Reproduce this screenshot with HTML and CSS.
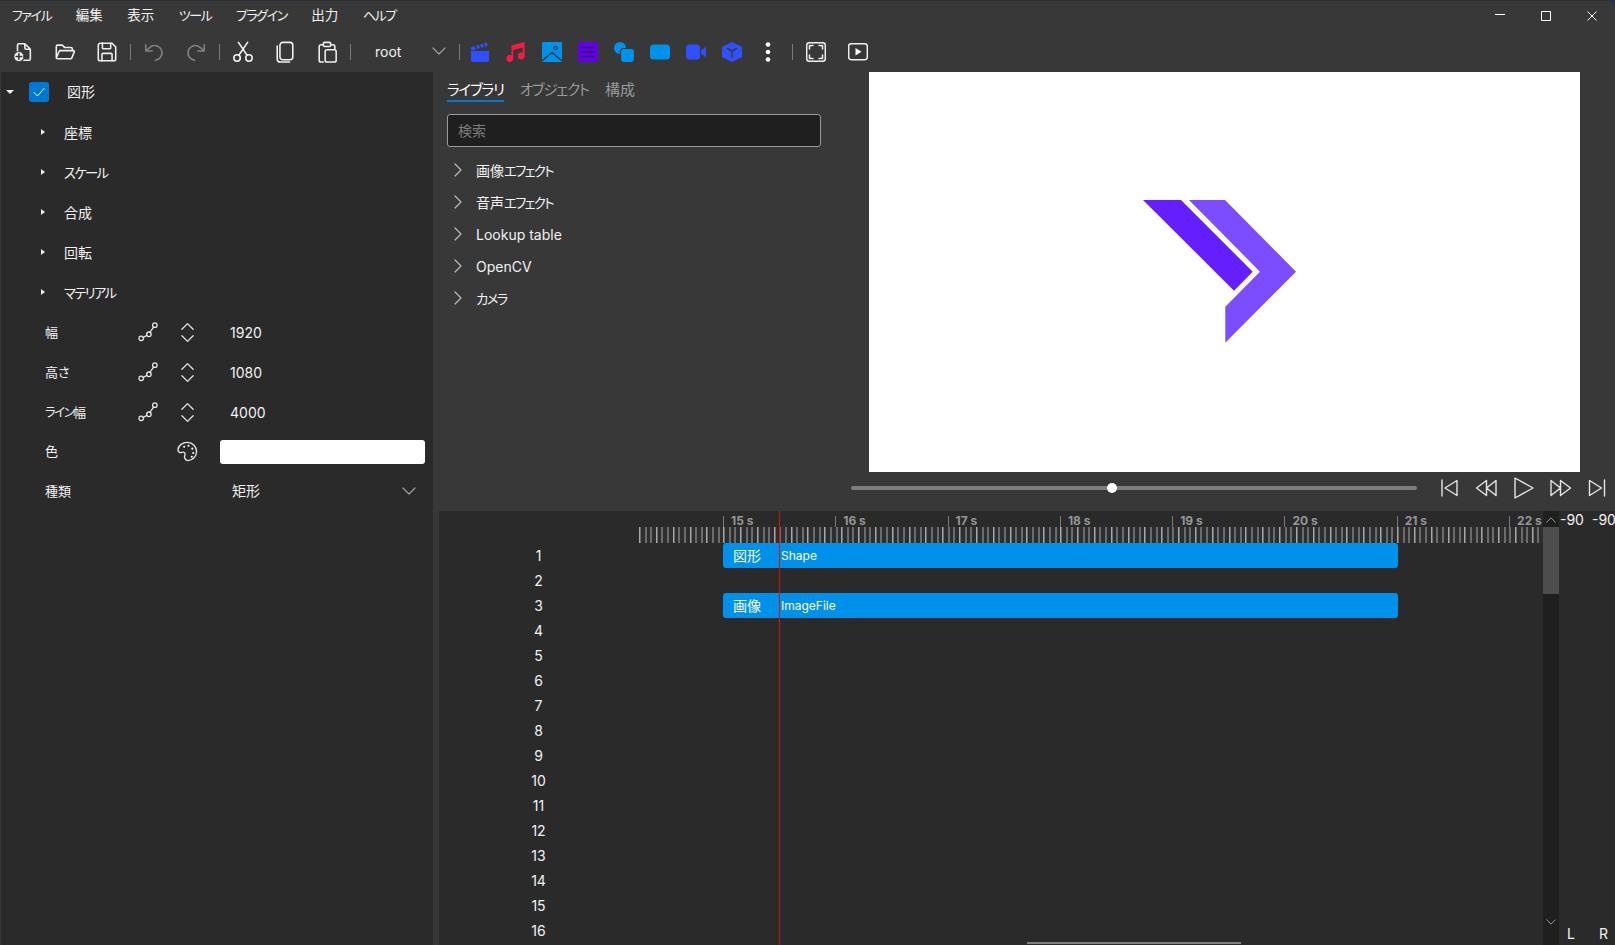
FILE: index.html
```html
<!DOCTYPE html>
<html lang="ja">

<head>
    <meta charset="UTF-8">
    <title>Beutl</title>
    <link rel="stylesheet" href="styles.css">
</head>

<body>

    <svg class="defs" width="0" height="0">
        <symbol id="i-key" viewBox="0 0 22 22">
            <circle cx="3.500" cy="18" r="2.500" />
            <circle cx="12" cy="13.500" r="2.500" />
            <circle cx="18.500" cy="3.500" r="2.500" />
            <path d="M5.800 17l3.900-2.300M13 11.300l4.200-5.700" />
        </symbol>
        <symbol id="i-updown" viewBox="0 0 16 22">
            <path d="M2 7.500l6-6 6 6M2 14.500l6 6 6-6" />
        </symbol>
        <symbol id="i-chevron" viewBox="0 0 14 8">
            <path d="M1 1l6 6 6-6" />
        </symbol>
        <symbol id="i-right" viewBox="0 0 8 14">
            <path d="M1 1l6 6-6 6" />
        </symbol>
    </svg>

    <div class="app">

        <div class="titlebar">
            <nav class="menu">
                <span class="ka">ファイル</span>
                <span>編集</span>
                <span>表示</span>
                <span class="ka">ツール</span>
                <span class="ka">プラグイン</span>
                <span>出力</span>
                <span class="ka">ヘルプ</span>
            </nav>
            <div class="winbtns">
                <span class="winbtn"><svg width="12" height="12" viewBox="0 0 12 12"><path d="M1 4.500h10" /></svg></span>
                <span class="winbtn"><svg width="12" height="12" viewBox="0 0 12 12"><rect x="1.500" y="1.500" width="9" height="9" /></svg></span>
                <span class="winbtn"><svg width="12" height="12" viewBox="0 0 12 12"><path d="M1.500 1.500l9 9M10.500 1.500l-9 9" /></svg></span>
            </div>
        </div>

        <div class="toolbar">
            <span class="tool"><svg viewBox="0 0 24 24"><path d="M6 11V4.500A1.500 1.500 0 0 1 7.500 3H14l6 6v10.500a1.500 1.500 0 0 1-1.500 1.500H13M14 3v4.500A1.500 1.500 0 0 0 15.500 9H20" /><circle class="fill" cx="7.500" cy="17" r="5.500" /><path class="cut" d="M7.500 14v6M4.500 17h6" /></svg></span>
            <span class="tool"><svg viewBox="0 0 24 24"><path d="M2.500 18V6a1.500 1.500 0 0 1 1.500-1.500h5l2.500 2.500h7a1.500 1.500 0 0 1 1.500 1.500V11M2.500 18.500l3-7a1.500 1.500 0 0 1 1.400-1h14.300a1 1 0 0 1 .9 1.400l-2.600 6.500a1.500 1.500 0 0 1-1.400 1H4a1.500 1.500 0 0 1-1.500-1.500z" /></svg></span>
            <span class="tool"><svg viewBox="0 0 24 24"><path d="M4.500 2.500h13l4 4v13a2 2 0 0 1-2 2h-15a2 2 0 0 1-2-2v-15a2 2 0 0 1 2-2z" /><path d="M7 2.500v5a1 1 0 0 0 1 1h7a1 1 0 0 0 1-1v-5M6.500 21.500v-7a1 1 0 0 1 1-1h9a1 1 0 0 1 1 1v7" /></svg></span>
            <span class="sep"></span>
            <span class="tool dim"><svg viewBox="0 0 24 24"><path d="M3 4v7h7M3.500 10.500l4-3.500a8 8 0 1 1 6 14" /></svg></span>
            <span class="tool dim"><svg viewBox="0 0 24 24"><path d="M21 4v7h-7M20.500 10.500l-4-3.500a8 8 0 1 0-6 14" /></svg></span>
            <span class="sep"></span>
            <span class="tool"><svg viewBox="0 0 24 24"><circle cx="5.500" cy="18.500" r="3.500" /><circle cx="18.500" cy="18.500" r="3.500" /><path d="M7.500 15.500L17 1.500M16.500 15.500L7 1.500" /></svg></span>
            <span class="tool"><svg viewBox="0 0 24 24"><rect x="6.500" y="1.500" width="14" height="19" rx="3" /><path d="M3.500 5.500v14a3.500 3.500 0 0 0 3.500 3.500h10" /></svg></span>
            <span class="tool"><svg viewBox="0 0 24 24"><path d="M8 4H5.500a2 2 0 0 0-2 2v15a2 2 0 0 0 2 2H8M16 4h2.500a2 2 0 0 1 2 2v3" /><rect x="8" y="1.500" width="8" height="4.500" rx="1.500" /><rect x="10" y="9.500" width="12" height="13.500" rx="2" /></svg></span>
            <span class="sep"></span>
            <div class="combo">
                <span>root</span>
                <svg class="line" width="14" height="8"><use href="#i-chevron" /></svg>
            </div>
            <span class="sep"></span>
            <span class="tool color"><svg viewBox="0 0 20 20"><path fill="#304ffe" d="M1 9h18v9a2 2 0 0 1-2 2H3a2 2 0 0 1-2-2z" /><path fill="#304ffe" d="M.5 5.500L16.500.5l1.400 3.500L1.500 8.500z" /><path stroke="#383838" stroke-width="1.300" d="M5 3.500l2 4M9 2.500l2 4M13 1.500l2 4" /></svg></span>
            <span class="tool color"><svg viewBox="0 0 20 20"><g fill="#ff1744"><circle cx="3.800" cy="16.500" r="3.400" /><circle cx="15.200" cy="14" r="3.400" /><path d="M5.500 3.500L18.500 0v14h-1.800V5.500L7.200 8v8.500H5.500z" /></g></svg></span>
            <span class="tool color"><svg viewBox="0 0 20 20"><rect width="20" height="20" rx="1" fill="#0091ea" /><path stroke="#2f3b46" stroke-width="1.500" d="M.5 18.500L10 10.500l9.500 8" /><circle cx="13.500" cy="6" r="1.700" stroke="#2f3b46" stroke-width="1.200" /></svg></span>
            <span class="tool color"><svg viewBox="0 0 20 20"><rect width="20" height="20" rx="2" fill="#6200ea" /><path stroke="#2e2050" stroke-width="1.500" d="M7 5.500h9M7 10h9M7 14.500h9M3.500 5.500h1.500M3.500 10h1.500M3.500 14.500h1.500" /></svg></span>
            <span class="tool color"><svg viewBox="0 0 20 20"><circle cx="6" cy="6" r="6" fill="#0091ea" /><rect x="6.500" y="6.500" width="14" height="14" rx="3.500" fill="#0091ea" stroke="#383838" stroke-width="1.200" /></svg></span>
            <span class="tool color"><svg viewBox="0 0 20 20"><rect y="2.500" width="20" height="15" rx="3.500" fill="#0091ea" /></svg></span>
            <span class="tool color"><svg viewBox="0 0 20 20"><rect y="2.500" width="14" height="15" rx="3.500" fill="#304ffe" /><path fill="#304ffe" d="M15 8.500l5-4v11l-5-4z" /></svg></span>
            <span class="tool color"><svg viewBox="0 0 20 20"><path fill="#304ffe" d="M10 0l10 5v10l-10 5-10-5V5z" /><path stroke="#383838" stroke-width="1.500" d="M5.500 6.500L10 9l4.500-2.500M10 9v6" /></svg></span>
            <span class="tool color"><svg viewBox="0 0 20 20"><g fill="#fff"><circle cx="10" cy="2.500" r="2.300" /><circle cx="10" cy="10" r="2.300" /><circle cx="10" cy="17.500" r="2.300" /></g></svg></span>
            <span class="sep wide"></span>
            <span class="tool box"><svg viewBox="0 0 20 20"><rect x=".7" y=".7" width="18.600" height="18.600" rx="2.500" /><path d="M3.500 7V3.500H7M13 3.500h3.500V7M16.500 13v3.500H13M7 16.500H3.500V13" /></svg></span>
            <span class="tool box"><svg viewBox="0 0 20 20"><rect x=".7" y="1.700" width="18.600" height="16" rx="2.500" /><path class="solid" d="M7.500 6l6 3.700-6 3.700z" /></svg></span>
        </div>

        <div class="workspace">

            <aside class="props">
                <div class="group">
                    <span class="arrow down"></span>
                    <span class="check"><svg width="14" height="14" viewBox="0 0 14 14"><path d="M2 7.500l3.500 3.500L12 3.500" /></svg></span>
                    <span class="group-name">図形</span>
                </div>
                <div class="row sub"><span class="arrow"></span><span>座標</span></div>
                <div class="row sub"><span class="arrow"></span><span class="ka">スケール</span></div>
                <div class="row sub"><span class="arrow"></span><span>合成</span></div>
                <div class="row sub"><span class="arrow"></span><span>回転</span></div>
                <div class="row sub"><span class="arrow"></span><span class="ka">マテリアル</span></div>
                <div class="row prop">
                    <span class="name">幅</span>
                    <svg class="line key"><use href="#i-key" /></svg>
                    <svg class="line updown"><use href="#i-updown" /></svg>
                    <span class="value">1920</span>
                </div>
                <div class="row prop">
                    <span class="name">高さ</span>
                    <svg class="line key"><use href="#i-key" /></svg>
                    <svg class="line updown"><use href="#i-updown" /></svg>
                    <span class="value">1080</span>
                </div>
                <div class="row prop">
                    <span class="name"><span class="ka">ライン</span>幅</span>
                    <svg class="line key"><use href="#i-key" /></svg>
                    <svg class="line updown"><use href="#i-updown" /></svg>
                    <span class="value">4000</span>
                </div>
                <div class="row prop short">
                    <span class="name">色</span>
                    <span></span>
                    <svg class="line palette" viewBox="0 0 22 22"><path d="M11 1.500c-5.500 0-10 3.500-10 8 0 2 2 3 3.500 2.500 2-.5 4-.5 4 1.500 0 1.500-1 2-.5 4 .5 2 1.500 3 3.500 3 5 0 9-4.500 9-9.500s-4-9.500-9.500-9.500z" /><g class="solid"><circle cx="7.500" cy="6" r="1.100" /><circle cx="12" cy="5" r="1.100" /><circle cx="16" cy="8" r="1.100" /><circle cx="17" cy="12.500" r="1.100" /><circle cx="15.500" cy="16.500" r="1.100" /></g></svg>
                    <span class="swatch"></span>
                </div>
                <div class="row prop">
                    <span class="name">種類</span>
                    <span></span>
                    <span></span>
                    <div class="select">
                        <span>矩形</span>
                        <svg class="line" width="14" height="8"><use href="#i-chevron" /></svg>
                    </div>
                </div>
            </aside>

            <div class="center">
                <div class="upper">

                    <section class="library">
                        <div class="tabs">
                            <span class="tab active ka">ライブラリ</span>
                            <span class="tab ka">オブジェクト</span>
                            <span class="tab">構成</span>
                        </div>
                        <div class="search">検索</div>
                        <ul class="tree">
                            <li><svg class="line" width="8" height="14"><use href="#i-right" /></svg><span>画像<span class="ka">エフェクト</span></span></li>
                            <li><svg class="line" width="8" height="14"><use href="#i-right" /></svg><span>音声<span class="ka">エフェクト</span></span></li>
                            <li><svg class="line" width="8" height="14"><use href="#i-right" /></svg><span>Lookup table</span></li>
                            <li><svg class="line" width="8" height="14"><use href="#i-right" /></svg><span>OpenCV</span></li>
                            <li><svg class="line" width="8" height="14"><use href="#i-right" /></svg><span class="ka">カメラ</span></li>
                        </ul>
                    </section>

                    <section class="player">
                        <div class="preview">
                            <svg width="711" height="400" viewBox="869 72 711 400">
                                <polygon fill="#651fff" points="1143,200 1181,200 1252.700,271.700 1234,290.700" />
                                <polygon fill="#7c4dff" points="1189,200 1225,200 1296,271.700 1225.300,342.700 1225.300,306.700 1260,271.700" />
                            </svg>
                        </div>
                        <div class="controls">
                            <div class="slider"><span class="thumb"></span></div>
                            <svg class="line ctl" viewBox="0 0 24 24"><path d="M5 4v16M20 4.500v15L8 12z" /></svg>
                            <svg class="line ctl" viewBox="0 0 24 24"><path d="M12.500 4.500L2.500 12l10 7.500zM22 4.500L12.500 12l9.500 7.500z" /></svg>
                            <svg class="line ctl" viewBox="0 0 24 24"><path d="M4 2v20l18-10z" /></svg>
                            <svg class="line ctl" viewBox="0 0 24 24"><path d="M12.500 4.500l10 7.500-10 7.500zM3 4.500L12.500 12 3 19.500z" /></svg>
                            <svg class="line ctl" viewBox="0 0 24 24"><path d="M19.500 4v16M4.500 4.500v15L16.500 12z" /></svg>
                        </div>
                    </section>

                </div>

                <section class="timeline">
                    <div class="tl-main">
                        <div class="ruler">
                            <span>15 s</span>
                            <span>16 s</span>
                            <span>17 s</span>
                            <span>18 s</span>
                            <span>19 s</span>
                            <span>20 s</span>
                            <span>21 s</span>
                            <span>22 s</span>
                        </div>
                        <div class="ticks"></div>
                        <div class="layers">
                            <div class="layer"><span class="num">1</span><div class="clip"><span class="clip-kind">図形</span><span class="clip-name">Shape</span></div></div>
                            <div class="layer"><span class="num">2</span></div>
                            <div class="layer"><span class="num">3</span><div class="clip"><span class="clip-kind">画像</span><span class="clip-name">ImageFile</span></div></div>
                            <div class="layer"><span class="num">4</span></div>
                            <div class="layer"><span class="num">5</span></div>
                            <div class="layer"><span class="num">6</span></div>
                            <div class="layer"><span class="num">7</span></div>
                            <div class="layer"><span class="num">8</span></div>
                            <div class="layer"><span class="num">9</span></div>
                            <div class="layer"><span class="num">10</span></div>
                            <div class="layer"><span class="num">11</span></div>
                            <div class="layer"><span class="num">12</span></div>
                            <div class="layer"><span class="num">13</span></div>
                            <div class="layer"><span class="num">14</span></div>
                            <div class="layer"><span class="num">15</span></div>
                            <div class="layer"><span class="num">16</span></div>
                        </div>
                        <span class="playhead"></span>
                        <span class="hthumb"></span>
                    </div>
                    <div class="vscroll">
                        <svg class="line" width="10" height="6" viewBox="0 0 14 8"><path d="M1 7l6-6 6 6" /></svg>
                        <span class="vthumb"></span>
                        <svg class="line bottom" width="10" height="6" viewBox="0 0 14 8"><path d="M1 1l6 6 6-6" /></svg>
                    </div>
                    <div class="meter">
                        <div class="meter-row"><span>-90</span><span>-90</span></div>
                        <div class="meter-row lr"><span>L</span><span>R</span></div>
                    </div>
                </section>
            </div>

        </div>
    </div>

</body>

</html>
```

FILE: styles.css
```css
* {
    box-sizing: border-box;
}

html,
body {
    margin: 0;
    height: 100%;
    overflow: hidden;
}

body {
    background: linear-gradient(#2d3038 0, #2d3038 1px, transparent 1px), linear-gradient(90deg, #23304f 0%, #23304f 17%, #2b5cab 20%, #2f4f9e 60%, #23305f 100%);
    font-family: Inter, "Noto Sans CJK JP", sans-serif;
    font-feature-settings: "palt";
    font-size: 14px;
    color: #f2f2f2;
}

/* kana in the original UI font is narrower than in Noto */
.ka {
    font-size: .95em;
    letter-spacing: -.12em;
}

.defs {
    position: absolute;
}

svg {
    display: block;
    flex: none;
    fill: none;
    stroke-linecap: round;
    stroke-linejoin: round;
}

.line {
    stroke: #e6e6e6;
    stroke-width: 1.400;
}

.solid {
    fill: #fff;
    stroke: none;
}

.app {
    height: 944px;
    margin-top: 1px;
    display: flex;
    flex-direction: column;
    background-color: #383838;
    border-radius: 0 8px 0 0;
    overflow: hidden;
}

/* title bar */
.titlebar {
    height: 29px;
    flex: none;
    display: flex;
    justify-content: space-between;
}

.menu {
    display: flex;
    align-items: center;
    gap: 24.500px;
    padding: 0 0 3px 12px;
    font-size: 13.500px;
}

.menu .ka {
    font-size: 13px;
    letter-spacing: -.11em;
}

.winbtns {
    display: flex;
}

.winbtn {
    width: 46px;
    display: flex;
    align-items: center;
    justify-content: center;
}

.winbtn svg {
    stroke: #fff;
    stroke-width: 1;
    stroke-linecap: butt;
}

/* toolbar */
.toolbar {
    height: 42px;
    flex: none;
    display: flex;
    align-items: center;
    padding: 2px 0 0 2px;
}

.tool {
    width: 42px;
    height: 40px;
    display: flex;
    align-items: center;
    justify-content: center;
}

.tool svg {
    width: 22px;
    height: 22px;
    stroke: #f0f0f0;
    stroke-width: 1.700;
}

.tool .fill {
    fill: #f0f0f0;
    stroke: #383838;
    stroke-width: 1;
}

.tool .cut {
    stroke: #383838;
}

.tool.dim svg {
    stroke: #808080;
}

.tool.box svg {
    width: 20px;
    height: 20px;
    stroke-width: 1.500;
}

.tool.color {
    width: 36px;
}

.tool.color svg {
    width: 20px;
    height: 20px;
    stroke: none;
}

.sep {
    width: 1px;
    height: 16px;
    margin: 0 2px;
    background-color: #7a7a7a;
}

.sep.wide {
    margin: 0 2px 0 6px;
}

.combo {
    width: 104px;
    padding: 0 11px 2px 22px;
    display: flex;
    align-items: center;
    justify-content: space-between;
}

.combo .line {
    stroke: #a0a0a0;
    stroke-width: 1.200;
}

/* main area */
.workspace {
    flex: 1;
    min-height: 0;
    display: flex;
}

.props {
    width: 432px;
    flex: none;
    margin-left: 1px;
    background-color: #2a2a2a;
}

.group {
    height: 40px;
    display: flex;
    align-items: center;
}

.group .arrow {
    margin: 0 15px 0 5px;
}

.group-name {
    padding-bottom: 2px;
}

.check {
    width: 20px;
    height: 20px;
    margin-right: 18px;
    border-radius: 3px;
    background-color: #0078d4;
    display: flex;
    align-items: center;
    justify-content: center;
}

.check svg {
    stroke: #fff;
    stroke-width: 1;
}

.arrow {
    width: 0;
    height: 0;
    border-style: solid;
    border-width: 3.500px 0 3.500px 4px;
    border-color: transparent transparent transparent #f0f0f0;
}

.arrow.down {
    border-width: 4px 4px 0 4px;
    border-color: #f0f0f0 transparent transparent transparent;
}

.row {
    height: 40px;
    display: flex;
    align-items: center;
}

.row.short {
    height: 39px;
}

.sub {
    padding-left: 40px;
}

.sub .arrow {
    margin-right: 19px;
}

.prop {
    display: grid;
    grid-template-columns: 84px 38px 40px 217px;
    align-items: center;
    padding-left: 44px;
}

.name {
    font-size: 13px;
    padding-bottom: 2px;
}

.key {
    width: 20px;
    height: 20px;
    justify-self: center;
}

.updown {
    width: 15px;
    height: 21px;
    justify-self: center;
}

.palette {
    width: 21px;
    height: 21px;
    justify-self: center;
}

.value {
    padding-left: 23px;
}

.swatch {
    height: 24px;
    width: 205px;
    margin-left: 13px;
    border-radius: 3px;
    background-color: #fff;
}

.select {
    width: 205px;
    margin-left: 13px;
    padding: 0 9px 0 12px;
    display: flex;
    align-items: center;
    justify-content: space-between;
}

.select span {
    padding-bottom: 3px;
}

.select .line {
    stroke: #a0a0a0;
    stroke-width: 1.200;
}

.center {
    flex: 1;
    min-width: 0;
    display: flex;
    flex-direction: column;
}

.upper {
    height: 439px;
    flex: none;
    display: flex;
}

/* library */
.library {
    width: 418px;
    flex: none;
    padding-left: 14px;
}

.tabs {
    height: 30px;
    display: flex;
    gap: 16px;
    padding-top: 7px;
}

.tab {
    color: #9a9a9a;
    font-size: 15px;
    line-height: 21px;
    height: 23px;
    white-space: nowrap;
}

.tab.ka {
    font-size: 14.500px;
    letter-spacing: -.08em;
}

.tab.active {
    color: #fff;
    border-bottom: 2px solid #0078d4;
}

.search {
    width: 374px;
    height: 33px;
    margin-top: 12px;
    padding: 0 0 2px 10px;
    display: flex;
    align-items: center;
    background-color: #1f1f1f;
    border: 1px solid #9a9a9a;
    border-radius: 3px;
    color: #7c7c7c;
}

.tree {
    list-style: none;
    margin: 7px 0 0;
    padding: 0;
}

.tree li {
    height: 32px;
    display: flex;
    align-items: center;
    gap: 14px;
    padding-left: 7px;
}

.tree .line {
    stroke: #bdbdbd;
    stroke-width: 1.200;
}

/* preview */
.player {
    flex: 1;
    min-width: 0;
}

.preview {
    width: 711px;
    height: 400px;
    margin-left: 18px;
    background-color: #fff;
}

.controls {
    height: 32px;
    display: flex;
    align-items: center;
}

.slider {
    width: 566px;
    height: 4px;
    margin-right: 13px;
    position: relative;
    border-radius: 2px;
    background-color: #7e7e7e;
}

.thumb {
    position: absolute;
    left: 256px;
    top: -3px;
    width: 10px;
    height: 10px;
    border-radius: 50%;
    background-color: #fff;
}

.ctl {
    width: 24px;
    height: 24px;
    margin: 0 6.500px;
}

/* timeline */
.timeline {
    flex: 1;
    min-height: 0;
    margin-left: 6px;
    display: flex;
    background-color: #2a2a2a;
}

.tl-main {
    width: 1104px;
    flex: none;
    position: relative;
    overflow: hidden;
}

.ruler {
    height: 16px;
    padding-left: 284px;
    display: flex;
    align-items: flex-end;
}

.ruler span {
    width: 112.300px;
    height: 11px;
    flex: none;
    padding-left: 7px;
    border-left: 1px solid #7a7a7a;
    color: #969696;
    font-size: 12px;
    font-weight: 700;
    line-height: 10px;
    white-space: nowrap;
}

.ticks {
    height: 16px;
    margin-left: 200px;
    background-image: repeating-linear-gradient(90deg, #a8a8a8 0, #a8a8a8 1px, transparent 1px, transparent 16.845px), repeating-linear-gradient(90deg, #6c6c6c 0, #6c6c6c 2px, #2e2e2e 2px, #2e2e2e 5.615px);
}

.layer {
    height: 25px;
    display: flex;
    align-items: center;
}

.num {
    width: 199px;
    flex: none;
    text-align: center;
}

.clip {
    width: 675px;
    height: 25px;
    margin-left: 85px;
    display: flex;
    align-items: center;
    border-radius: 3px;
    background-color: #0091ea;
    color: #fff;
}

.clip-kind {
    width: 48px;
    text-align: center;
    margin-right: 10px;
    padding-bottom: 2px;
}

.clip-name {
    font-size: 12px;
}

.playhead {
    position: absolute;
    left: 340px;
    top: 0;
    bottom: 0;
    width: 1px;
    background-color: #d81010;
}

.hthumb {
    position: absolute;
    left: 588px;
    bottom: 1px;
    width: 214px;
    height: 2px;
    background-color: #808080;
}

.vscroll {
    width: 16px;
    flex: none;
    display: flex;
    flex-direction: column;
    align-items: center;
    padding-top: 6px;
    background-color: #1f1f1f;
}

.vscroll .line {
    stroke: #b0b0b0;
    stroke-width: 1.200;
}

.vthumb {
    width: 16px;
    height: 67px;
    margin-top: 4px;
    background-color: #4d4d4d;
}

.vscroll .bottom {
    margin-top: auto;
    margin-bottom: 20px;
}

.meter {
    flex: 1;
    min-width: 0;
    display: flex;
    flex-direction: column;
    justify-content: space-between;
}

.meter-row {
    display: grid;
    grid-template-columns: 32px 23px;
    font-size: 14px;
    padding-left: 1px;
    white-space: nowrap;
}

.lr {
    grid-template-columns: 32px 16px;
    padding: 0 0 3px 8px;
}
```
